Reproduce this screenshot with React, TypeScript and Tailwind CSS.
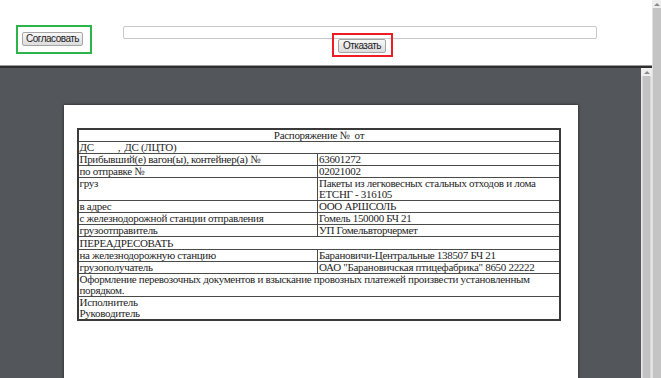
const cell = "border border-[#4a4a4a] p-0 pl-[1px] leading-[11px] align-top text-left font-normal font-['Liberation_Serif',serif] text-[11px] tracking-[-0.3px]";

function Btn({ label, className }: { label: string; className?: string }) {
  return (
    <button
      className={`block h-[14px] rounded-[2px] border border-[#a5a5a5] bg-gradient-to-b from-[#f8f8f8] to-[#dcdcdc] p-0 text-center text-[10px] leading-[12px] tracking-[-0.5px] text-[#222] font-['Liberation_Sans',sans-serif] ${className ?? ""}`}
    >
      {label}
    </button>
  );
}

function UpArrow() {
  return (
    <div className="flex h-[8px] items-center justify-center bg-[#eeeeee]">
      <div className="h-0 w-0 border-x-[3px] border-b-[3px] border-x-transparent border-b-[#8a8a8a]" />
    </div>
  );
}

export default function App() {
  return (
    <div className="flex h-[378px] w-[661px] overflow-hidden bg-white">
      <div className="flex min-w-0 flex-1 flex-col">
        {/* Action bar */}
        <div className="flex h-[66px] shrink-0 items-start border-b border-[#9a9a9a] pl-[16px] pt-[25px]">
          <div className="flex h-[29px] w-[76px] items-start border-2 border-[#2cb34a] pl-[4px] pt-[5px]">
            <Btn label="Согласовать" className="w-[61px]" />
          </div>
          <div className="ml-[31px] mt-[1px] flex w-[474px] flex-col items-center">
            <div className="h-[13px] w-full rounded-[2px] border border-[#c9c9c9] bg-white" />
            <div className="relative ml-[4px]">
              <Btn label="Отказать" className="w-[48px]" />
              <div className="absolute -left-[6px] -right-[7px] -top-[6px] -bottom-[4px] border-2 border-[#ee1c25]" />
            </div>
          </div>
        </div>

        {/* Document viewer */}
        <div className="flex min-h-0 flex-1 border-t-2 border-[#2e2e2e]">
          <div className="min-w-0 flex-1 bg-[#53565a] pt-[37px]">
            <div className="mx-auto h-[300px] w-[514px] bg-white pl-[13px] pt-[23px] shadow-[0_0_3px_rgba(0,0,0,0.6)]">
              <table className="w-[484px] border-collapse border-2 border-[#3a3a3a] text-[#1e1e1e]">
                <tbody>
                  <tr>
                    <td colSpan={2} className={`${cell} text-center`} style={{ textAlign: "center" }}>
                      <span className="whitespace-pre">Распоряжение №  от</span>
                    </td>
                  </tr>
                  <tr>
                    <td colSpan={2} className={cell}>
                      ДС<span className="ml-[24px]">,</span>
                      <span className="ml-[4px]">ДС (ЛЦТО)</span>
                    </td>
                  </tr>
                  <tr>
                    <td className={`${cell} w-[240px]`}>Прибывший(е) вагон(ы), контейнер(а) №</td>
                    <td className={cell}>63601272</td>
                  </tr>
                  <tr>
                    <td className={cell}>по отправке №</td>
                    <td className={cell}>02021002</td>
                  </tr>
                  <tr>
                    <td className={cell}>груз</td>
                    <td className={cell}>
                      Пакеты из легковесных стальных отходов и лома
                      <br />
                      ЕТСНГ - 316105
                    </td>
                  </tr>
                  <tr>
                    <td className={cell}>в адрес</td>
                    <td className={cell}>ООО АРШСОЛЬ</td>
                  </tr>
                  <tr>
                    <td className={cell}>с железнодорожной станции отправления</td>
                    <td className={cell}>Гомель 150000 БЧ 21</td>
                  </tr>
                  <tr>
                    <td className={cell}>грузоотправитель</td>
                    <td className={cell}>УП Гомельвторчермет</td>
                  </tr>
                  <tr>
                    <td colSpan={2} className={`${cell} leading-[12px]`}>ПЕРЕАДРЕСОВАТЬ</td>
                  </tr>
                  <tr>
                    <td className={cell}>на железнодорожную станцию</td>
                    <td className={cell}>Барановичи-Центральные 138507 БЧ 21</td>
                  </tr>
                  <tr>
                    <td className={cell}>грузополучатель</td>
                    <td className={cell}>ОАО "Барановичская птицефабрика" 8650 22222</td>
                  </tr>
                  <tr>
                    <td colSpan={2} className={cell}>
                      Оформление перевозочных документов и взыскание провозных платежей произвести установленным
                      <br />
                      порядком.
                    </td>
                  </tr>
                  <tr>
                    <td colSpan={2} className={cell}>
                      Исполнитель
                      <br />
                      Руководитель
                    </td>
                  </tr>
                </tbody>
              </table>
            </div>
          </div>
          {/* inner scrollbar */}
          <div className="flex w-[11px] shrink-0 flex-col bg-[#e6e6e6]">
            <UpArrow />
            <div className="mx-[1px] flex-1 border-x border-[#d8d8d8] bg-[#c2c2c2]" />
          </div>
        </div>
      </div>
      {/* outer scrollbar */}
      <div className="flex w-[9px] shrink-0 flex-col bg-[#f2f2f2]">
        <UpArrow />
        <div className="flex-1 border-l border-[#e0e0e0] bg-[#c4c4c4]" />
      </div>
    </div>
  );
}
